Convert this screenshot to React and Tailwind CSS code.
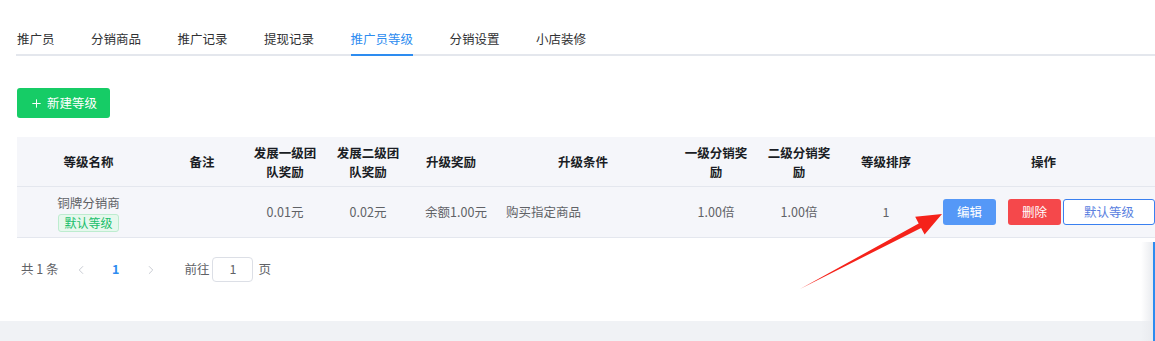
import { ChevronLeft, ChevronRight, Plus } from 'lucide-react';

const tabs = ['推广员', '分销商品', '推广记录', '提现记录', '推广员等级', '分销设置', '小店装修'];

const cols = 'grid grid-cols-[143px_84px_82px_84px_82px_182px_84px_82px_92px_1fr]';

const headers = [
  ['等级名称'],
  ['备注'],
  ['发展一级团', '队奖励'],
  ['发展二级团', '队奖励'],
  ['升级奖励'],
  ['升级条件'],
  ['一级分销奖', '励'],
  ['二级分销奖', '励'],
  ['等级排序'],
  ['操作'],
];

function Arrow() {
  return (
    <svg className="absolute left-0 top-0 pointer-events-none" width="1155" height="341">
      <polygon
        points="800,289 921.1,227.9 924.6,234.6 942,214 915.2,216.8 918.7,223.5"
        fill="#f5221a"
      />
    </svg>
  );
}

export default function App() {
  return (
    <div className="relative w-[1155px] h-[341px] overflow-hidden bg-[#f0f2f5] font-['Noto_Sans_CJK_SC',sans-serif] text-[12.5px]">
      <div className="h-[321px] bg-white pl-4">
        {/* tabs */}
        <div className="flex gap-[36.5px] border-b-2 border-[#e4e7ed] pl-px">
          {tabs.map((t) => (
            <div
              key={t}
              className={`pt-[29px] pb-[5px] leading-[20px] -mb-[2px] border-b-2 ${
                t === '推广员等级' ? 'border-[#2d8cf0] text-[#2d8cf0]' : 'border-transparent text-[#303133]'
              }`}
            >
              {t}
            </div>
          ))}
        </div>

        <button className="mt-[32px] ml-px flex h-[30px] w-[93px] items-center justify-center gap-1 rounded-[3px] bg-[#16cc66] text-[12.5px] text-white">
          <Plus size={13} strokeWidth={1.8} />
          新建等级
        </button>

        {/* table */}
        <div className="mt-[19px] ml-px">
          <div className={`${cols} h-[50px] items-center border-b border-[#e4e7ee] bg-[#f5f6fa] font-bold text-[#1a1d24] leading-[19px]`}>
            {headers.map((h, i) => (
              <div key={i} className="text-center">
                {h.map((l) => (
                  <div key={l}>{l}</div>
                ))}
              </div>
            ))}
          </div>
          <div className={`${cols} h-[51px] items-center border-b border-[#e4e7ee] bg-[#f5f6fa] text-[#606266]`}>
            <div className="flex flex-col items-center">
              <div className="leading-[20px]">铜牌分销商</div>
              <span className="mt-px flex h-[18px] items-center rounded-[3px] border border-[#bdeccf] bg-[#e6f8ed] px-[5px] text-[12px] text-[#19be6b]">
                默认等级
              </span>
            </div>
            <div />
            <div className="text-center">0.01元</div>
            <div className="text-center">0.02元</div>
            <div className="pl-[10px] text-center">余额1.00元</div>
            <div className="pl-[14px]">购买指定商品</div>
            <div className="text-center">1.00倍</div>
            <div className="text-center">1.00倍</div>
            <div className="text-center">1</div>
            <div className="flex items-center pl-[11px]">
              <button className="h-[26px] w-[53px] rounded-[3px] bg-[#5598f7] text-[12.5px] text-white">编辑</button>
              <button className="ml-[12px] h-[26px] w-[53px] rounded-[3px] bg-[#f5484b] text-[12.5px] text-white">删除</button>
              <button className="ml-[2px] h-[26px] w-[92px] rounded-[3px] border border-[#3a80f0] bg-white text-[12.5px] text-[#5a7fe0]">
                默认等级
              </button>
            </div>
          </div>
        </div>

        {/* pagination */}
        <div className="mt-[19px] flex h-[25px] items-center pl-[5px] text-[#606266]">
          <span className="w-[38px]">共 1 条</span>
          <ChevronLeft className="ml-[15px] text-[#c0c4cc]" size={14} strokeWidth={1.5} />
          <span className="ml-[24px] font-bold text-[#2d8cf0]">1</span>
          <ChevronRight className="ml-[25px] text-[#c0c4cc]" size={14} strokeWidth={1.5} />
          <span className="ml-[26px]">前往</span>
          <div className="ml-[3px] flex h-[25px] w-[41px] items-center justify-center rounded-[4px] border border-[#dcdfe6]">1</div>
          <span className="ml-[5px]">页</span>
        </div>
      </div>

      {/* side panel edge */}
      <div className="absolute right-0 top-[242px] bottom-0 w-[14px] border-r-2 border-[#2d8cf0] bg-gradient-to-r from-transparent to-[#e9ebef]" />

      <Arrow />
    </div>
  );
}
